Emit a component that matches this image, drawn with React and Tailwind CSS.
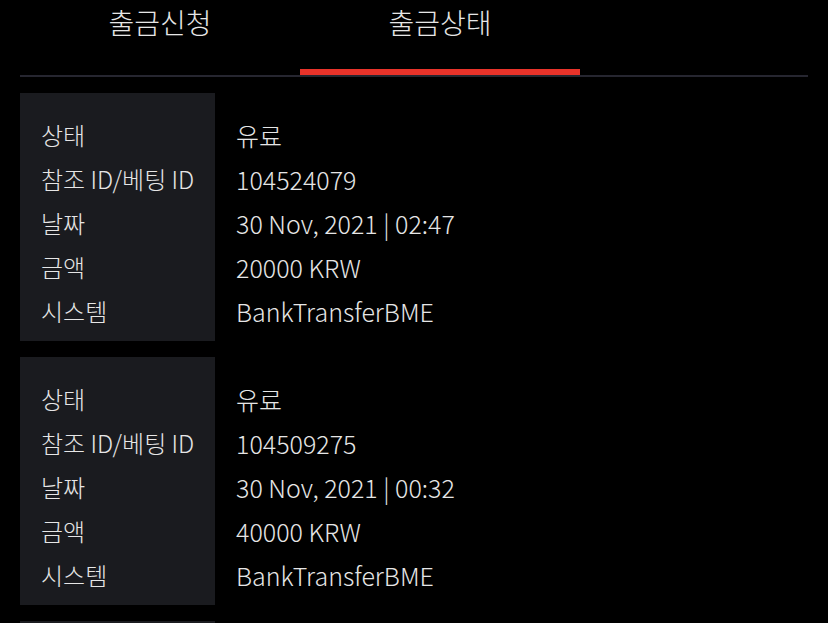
const records = [
  { ref: '104524079', date: '30 Nov, 2021 | 02:47', amount: '20000 KRW', system: 'BankTransferBME' },
  { ref: '104509275', date: '30 Nov, 2021 | 00:32', amount: '40000 KRW', system: 'BankTransferBME' },
  { ref: '104498112', date: '29 Nov, 2021 | 22:15', amount: '30000 KRW', system: 'BankTransferBME' },
]

function Record({ r }) {
  const rows = [
    ['상태', '유료'],
    ['참조 ID/베팅 ID', r.ref],
    ['날짜', r.date],
    ['금액', r.amount],
    ['시스템', r.system],
  ]
  return (
    <div className="flex">
      <div className="w-[195px] shrink-0 bg-[#1a1b1f] pl-[21px] pt-[20px] pb-[8px]">
        {rows.map(([k]) => (
          <div key={k} className="whitespace-nowrap leading-[44px]">{k}</div>
        ))}
      </div>
      <div className="pl-[21px] pt-[20px] pb-[8px] text-[25px]">
        {rows.map(([k, v]) => (
          <div key={k} className="whitespace-nowrap leading-[44px]">{v}</div>
        ))}
      </div>
    </div>
  )
}

export default function App() {
  return (
    <div
      className="h-[623px] overflow-hidden bg-black px-[20px] text-[24px] font-light text-[#e6e6e6]"
      style={{ fontFamily: '"Noto Sans CJK KR", "Noto Sans", sans-serif' }}
    >
      <div className="flex border-b-2 border-[#262630]">
        <div className="w-[280px] pb-[35px] pt-[4px] text-center text-[28px] leading-[36px]">출금신청</div>
        <div className="relative w-[280px] pb-[35px] pt-[4px] text-center text-[28px] leading-[36px]">
          출금상태
          <div className="absolute bottom-0 left-0 right-0 h-[6px] bg-[#e8332a]" />
        </div>
      </div>
      <div className="flex flex-col gap-[16px] pt-[16px]">
        {records.map((r) => (
          <Record key={r.ref} r={r} />
        ))}
      </div>
    </div>
  )
}
